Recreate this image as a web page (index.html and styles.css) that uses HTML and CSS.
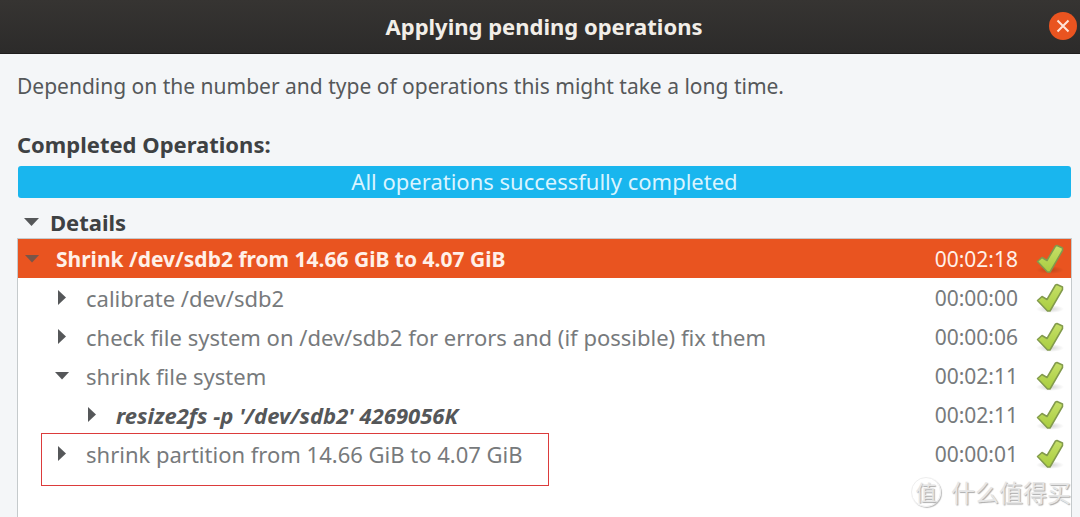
FILE: index.html
```html
<!DOCTYPE html>
<html lang="en">
<head>
<meta charset="utf-8">
<title>Applying pending operations</title>
<link rel="stylesheet" href="styles.css">
</head>
<body>
<svg class="defs" aria-hidden="true">
  <defs>
    <linearGradient id="leaf" x1="0" y1="0" x2="0" y2="1">
      <stop offset="0" stop-color="#c6e068"/>
      <stop offset="1" stop-color="#a9cd40"/>
    </linearGradient>
    <radialGradient id="shade">
      <stop offset="0" stop-color="#000" stop-opacity=".18"/>
      <stop offset="1" stop-color="#000" stop-opacity="0"/>
    </radialGradient>
    <symbol id="check" viewBox="0 0 30 32">
      <ellipse cx="15" cy="27" rx="14" ry="4" fill="url(#shade)"/>
      <path d="M2.500 18.500L7 14.500L12 17.500L20.500 3L22 2.500L27.500 5L27.500 7.500L15 29L12.500 29Z" fill="url(#leaf)" stroke="#829a4c" stroke-width="1.500" stroke-linejoin="round"/>
    </symbol>
  </defs>
</svg>
<div class="window">
  <header class="titlebar">
    <h1 class="title">Applying pending operations</h1>
    <button class="close" type="button" aria-label="Close">
      <svg viewBox="0 0 28 28"><path d="M8.500 8.500L19.500 19.500M19.500 8.500L8.500 19.500"/></svg>
    </button>
  </header>
  <main class="content">
    <p class="intro">Depending on the number and type of operations this might take a long time.</p>
    <h2 class="heading">Completed Operations:</h2>
    <div class="progress" role="status">All operations successfully completed</div>
    <button class="details" type="button" aria-expanded="true"><span class="arrow down"></span>Details</button>
    <div class="panel">
      <table class="operations">
        <tbody>
          <tr class="selected">
            <td><div class="name"><button class="toggle" type="button" aria-label="Collapse"><span class="arrow down"></span></button>Shrink /dev/sdb2 from 14.66 GiB to 4.07 GiB</div></td>
            <td class="time">00:02:18</td>
            <td class="status"><svg class="check" role="img" aria-label="Success"><use href="#check"/></svg></td>
          </tr>
          <tr>
            <td><div class="name level-1"><button class="toggle" type="button" aria-label="Expand"><span class="arrow right"></span></button>calibrate /dev/sdb2</div></td>
            <td class="time">00:00:00</td>
            <td class="status"><svg class="check" role="img" aria-label="Success"><use href="#check"/></svg></td>
          </tr>
          <tr>
            <td><div class="name level-1"><button class="toggle" type="button" aria-label="Expand"><span class="arrow right"></span></button>check file system on /dev/sdb2 for errors and (if possible) fix them</div></td>
            <td class="time">00:00:06</td>
            <td class="status"><svg class="check" role="img" aria-label="Success"><use href="#check"/></svg></td>
          </tr>
          <tr>
            <td><div class="name level-1"><button class="toggle" type="button" aria-label="Collapse"><span class="arrow down"></span></button>shrink file system</div></td>
            <td class="time">00:02:11</td>
            <td class="status"><svg class="check" role="img" aria-label="Success"><use href="#check"/></svg></td>
          </tr>
          <tr>
            <td><div class="name level-2 command"><button class="toggle" type="button" aria-label="Expand"><span class="arrow right"></span></button>resize2fs -p '/dev/sdb2' 4269056K</div></td>
            <td class="time">00:02:11</td>
            <td class="status"><svg class="check" role="img" aria-label="Success"><use href="#check"/></svg></td>
          </tr>
          <tr>
            <td><div class="name level-1 marked"><button class="toggle" type="button" aria-label="Expand"><span class="arrow right"></span></button>shrink partition from 14.66 GiB to 4.07 GiB</div></td>
            <td class="time">00:00:01</td>
            <td class="status"><svg class="check" role="img" aria-label="Success"><use href="#check"/></svg></td>
          </tr>
        </tbody>
      </table>
    </div>
  </main>
  <div class="watermark"><span class="seal">值</span><span>什么值得买</span></div>
</div>
</body>
</html>
```
FILE: styles.css
```css
* {
  box-sizing: border-box;
}

body {
  margin: 0;
  font-family: "Noto Sans", "Noto Sans CJK SC", sans-serif;
  font-size: 22px;
  line-height: 30px;
  color: #55585a;
  background: #f4f6f8;
}

button {
  padding: 0;
  border: 0;
  background: none;
  font: inherit;
  color: inherit;
}

.defs {
  position: absolute;
  width: 0;
  height: 0;
}

.window {
  position: relative;
  display: flex;
  flex-direction: column;
  height: 100vh;
  overflow: hidden;
}

.titlebar {
  display: grid;
  grid-template-columns: 28px 1fr 28px;
  align-items: center;
  flex: none;
  height: 54px;
  padding: 0 3px 2px 11px;
  background: linear-gradient(#363432, #2c2b2a);
  border-bottom: 1px solid #1f1e1d;
}

.title {
  grid-column: 2;
  margin: 0;
  text-align: center;
  font-size: 22px;
  color: #f2eee8;
}

.close {
  width: 28px;
  height: 28px;
  border-radius: 50%;
  background: #e95420;
}

.close svg {
  display: block;
  fill: none;
  stroke: #ffe4d8;
  stroke-width: 2;
}

.content {
  display: flex;
  flex-direction: column;
  flex: 1;
  padding: 17px 8px 0 17px;
}

.intro {
  margin: 0 0 28px;
  font-size: 21px;
}

.heading {
  margin: 0 0 7px;
  font-size: 22px;
  color: #3e4143;
}

.progress {
  height: 32px;
  margin: 0 1px;
  border-radius: 3px;
  text-align: center;
  color: #d9f4ff;
  background: #19b6ee;
}

.details {
  display: flex;
  align-items: center;
  align-self: flex-start;
  gap: 11px;
  margin: 9px 0 1px 7px;
  font-weight: 700;
  color: #3e4143;
}

.arrow {
  display: block;
  background: #555759;
}

.down {
  width: 15px;
  height: 8px;
  clip-path: polygon(0 0, 100% 0, 50% 100%);
}

.right {
  width: 8px;
  height: 15px;
  clip-path: polygon(0 0, 100% 50%, 0 100%);
}

.panel {
  flex: 1;
  border: 1px solid #c5cacc;
  border-bottom: 0;
  background: #fff;
}

.operations {
  width: 100%;
  border-collapse: collapse;
  color: #777a7c;
}

.operations td {
  height: 39px;
  padding: 0;
}

.name {
  position: relative;
  display: flex;
  align-items: center;
  gap: 16px;
  padding-left: 6px;
}

.level-1 {
  padding-left: 36px;
}

.level-2 {
  padding-left: 66px;
}

.toggle {
  display: flex;
  justify-content: center;
  width: 16px;
}

.selected {
  color: #fff0e8;
  background: #e95420;
}

.selected .name {
  font-size: 21px;
  font-weight: 700;
}

.selected .arrow {
  background: #795548;
}

.command {
  font-weight: 700;
  font-style: italic;
  color: #555759;
}

.marked::after {
  content: "";
  position: absolute;
  top: -6px;
  left: 23px;
  width: 506px;
  height: 51px;
  border: 1px solid #dc3b3b;
}

.operations .time {
  width: 104px;
  padding-right: 17px;
  font-size: 21px;
  text-align: right;
}

.operations .status {
  width: 36px;
}

.check {
  display: block;
  width: 30px;
  height: 32px;
}

.watermark {
  position: absolute;
  right: 9px;
  bottom: 9px;
  display: flex;
  align-items: center;
  gap: 10px;
  font-family: "Noto Sans CJK SC", sans-serif;
  font-size: 24px;
  line-height: 32px;
  color: #e6e6e6;
  text-shadow: 1px 1px 1px #aaa;
}

.seal {
  width: 30px;
  height: 30px;
  border: 1px solid #eee;
  border-radius: 50%;
  box-shadow: 1px 1px 1px #bbb;
  font-size: 21px;
  line-height: 26px;
  text-align: center;
}
```
